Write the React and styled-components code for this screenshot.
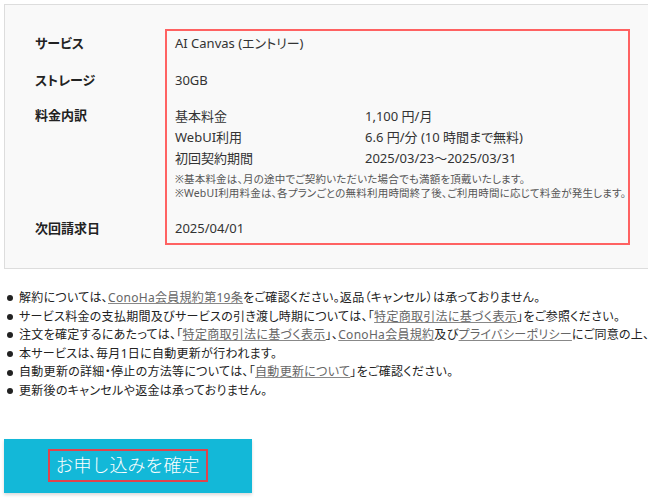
import React from "react";
import styled, { createGlobalStyle } from "styled-components";

const GlobalStyle = createGlobalStyle`
  html, body {
    margin: 0;
    padding: 0;
    background: #ffffff;
    overflow: hidden;
  }
  body {
    font-family: "Noto Sans", "Noto Sans CJK JP", sans-serif;
    color: #333333;
    font-feature-settings: "palt";
  }
`;

const Page = styled.div`
  width: 648px;
  height: 503px;
  overflow: hidden;
  padding: 4px 0 0 4px;
  box-sizing: border-box;
`;

const Panel = styled.section`
  width: 680px;
  box-sizing: border-box;
  background: #f9f9f9;
  border: 1px solid #dddddd;
  padding: 24px 0 23px 30px;
`;

const Table = styled.div`
  display: grid;
  grid-template-columns: 130px 465px;
  font-size: 13px;
`;

const Frame = styled.div`
  grid-column: 2;
  grid-row: 1 / 5;
  border: 2px solid #ff6262;
  pointer-events: none;
`;

const Label = styled.div`
  grid-column: 1;
  grid-row: ${(p) => p.$row};
  padding: ${(p) => p.$pad};
  line-height: 19px;
  font-weight: 700;
  color: #222222;
`;

const Value = styled.div`
  grid-column: 2;
  grid-row: ${(p) => p.$row};
  padding: ${(p) => p.$pad};
  padding-left: 10px;
  line-height: 19px;
  color: #333333;
`;

const FeeRow = styled.div`
  display: grid;
  grid-template-columns: 190px 1fr;
  line-height: 21px;
`;

const Notes = styled.div`
  margin-top: 3px;
  font-size: 10.5px;
  line-height: 14px;
  letter-spacing: 0.2px;
  color: #555555;
  white-space: nowrap;
`;

const List = styled.ul`
  list-style: none;
  margin: 20px 0 0 0;
  padding: 0;
  font-size: 12px;
  line-height: 18.6px;
  letter-spacing: 0.3px;
  color: #222222;
  white-space: nowrap;
`;

const Item = styled.li`
  display: flex;
  align-items: center;

  &::before {
    content: "";
    flex: none;
    width: 6px;
    height: 6px;
    border-radius: 50%;
    background: #222222;
    margin: 0 6px 0 3px;
  }
`;

const Link = styled.a`
  color: #666666;
  text-decoration: underline;
  text-decoration-color: #888888;
`;

const Submit = styled.button`
  display: flex;
  align-items: center;
  justify-content: center;
  margin-top: 38px;
  width: 248px;
  height: 54px;
  border: none;
  background: #13b8d8;
  box-shadow: 0 2px 3px rgba(0, 0, 0, 0.15);
  cursor: pointer;
  padding: 0;
`;

const SubmitText = styled.span`
  display: inline-block;
  box-sizing: border-box;
  width: 160px;
  height: 33px;
  border: 2px solid #e0444c;
  color: #ffffff;
  font-family: "Noto Sans", "Noto Sans CJK JP", sans-serif;
  font-size: 18px;
  font-weight: 300;
  line-height: 29px;
  text-align: center;
  margin-left: -1px;
`;

const rows = [
  { label: "サービス", pad: "5px 0 9px" },
  { label: "ストレージ", pad: "9px 0 8px" },
  { label: "料金内訳", pad: "8px 0 9px" },
  { label: "次回請求日", pad: "9.5px 0 7.5px" },
];

const fees = [
  ["基本料金", "1,100 円/月"],
  ["WebUI利用", "6.6 円/分 (10 時間まで無料)"],
  ["初回契約期間", "2025/03/23～2025/03/31"],
];

export default function App() {
  return (
    <Page>
      <GlobalStyle />
      <Panel>
        <Table>
          <Frame />
          {rows.map((r, i) => (
            <Label key={r.label} $row={i + 1} $pad={r.pad}>
              {r.label}
            </Label>
          ))}
          <Value $row={1} $pad={rows[0].pad}>
            AI Canvas (エントリー)
          </Value>
          <Value $row={2} $pad={rows[1].pad}>
            30GB
          </Value>
          <Value $row={3} $pad={rows[2].pad}>
            {fees.map(([k, v]) => (
              <FeeRow key={k}>
                <span>{k}</span>
                <span>{v}</span>
              </FeeRow>
            ))}
            <Notes>
              ※基本料金は、月の途中でご契約いただいた場合でも満額を頂戴いたします。
              <br />
              ※WebUI利用料金は、各プランごとの無料利用時間終了後、ご利用時間に応じて料金が発生します。
            </Notes>
          </Value>
          <Value $row={4} $pad={rows[3].pad}>
            2025/04/01
          </Value>
        </Table>
      </Panel>

      <List>
        <Item>
          <span>
            解約については、<Link>ConoHa会員規約第19条</Link>
            をご確認ください。返品（キャンセル）は承っておりません。
          </span>
        </Item>
        <Item>
          <span>
            サービス料金の支払期間及びサービスの引き渡し時期については、「
            <Link>特定商取引法に基づく表示</Link>」をご参照ください。
          </span>
        </Item>
        <Item>
          <span>
            注文を確定するにあたっては、「<Link>特定商取引法に基づく表示</Link>」、
            <Link>ConoHa会員規約</Link>及び<Link>プライバシーポリシー</Link>
            にご同意の上、注文を確定してください。
          </span>
        </Item>
        <Item>
          <span>本サービスは、毎月1日に自動更新が行われます。</span>
        </Item>
        <Item>
          <span>
            自動更新の詳細・停止の方法等については、「<Link>自動更新について</Link>
            」をご確認ください。
          </span>
        </Item>
        <Item>
          <span>更新後のキャンセルや返金は承っておりません。</span>
        </Item>
      </List>

      <Submit type="button">
        <SubmitText>お申し込みを確定</SubmitText>
      </Submit>
    </Page>
  );
}
